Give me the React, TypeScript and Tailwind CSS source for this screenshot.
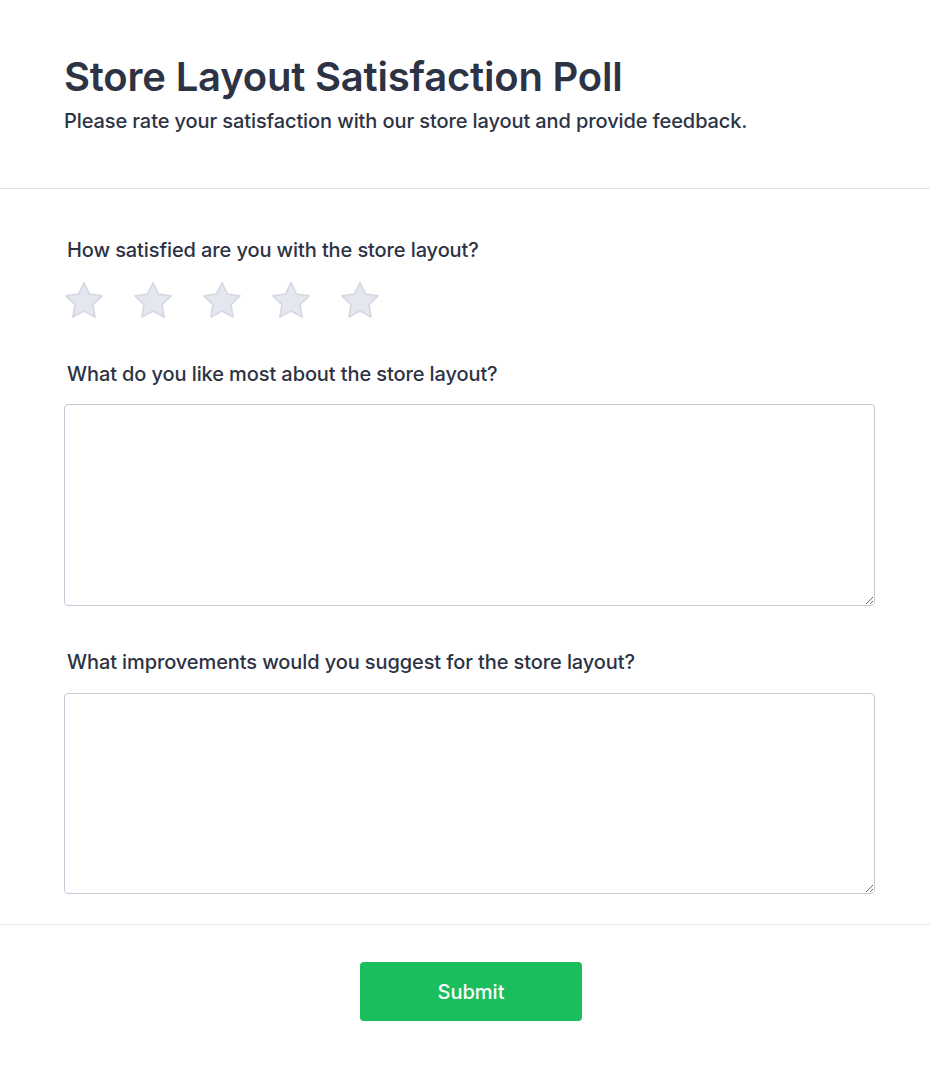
import React, { useState } from 'react';

const Star = ({ active }: { active: boolean }) => (
  <svg viewBox="2.2 2.2 19.6 18.8" className="w-[38px] h-[36px]">
    <path
      d="M12 2.6l2.9 5.9 6.5.9-4.7 4.6 1.1 6.5L12 17.4l-5.8 3.1 1.1-6.5-4.7-4.6 6.5-.9z"
      fill={active ? '#facc15' : '#e5e7ef'}
      stroke={active ? '#eab308' : '#d5d9e3'}
      strokeWidth="0.9"
      strokeLinejoin="round"
    />
  </svg>
);

export default function App() {
  const [rating, setRating] = useState(0);

  return (
    <div className="min-h-screen bg-white" style={{ fontFamily: 'Inter, "Noto Sans", sans-serif' }}>
      {/* Header */}
      <div className="px-16 pt-[53px] pb-[53px] border-b border-[#dde1ea]">
        <h1 className="text-[40px] leading-[48px] font-semibold text-[#2d3344] tracking-[-0.2px]">
          Store Layout Satisfaction Poll
        </h1>
        <p className="text-xl leading-7 font-medium tracking-[-0.1px] text-[#2d3344] mt-[6px]">
          Please rate your satisfaction with our store layout and provide feedback.
        </p>
      </div>

      {/* Questions */}
      <div className="pl-16 pr-[55px] pt-[47px] pb-[30px]">
        <label className="block ml-[3px] text-xl leading-7 font-medium tracking-[-0.1px] text-[#2d3344]">
          How satisfied are you with the store layout?
        </label>
        <div className="flex gap-[31px] mt-[18px] ml-px">
          {[1, 2, 3, 4, 5].map((n) => (
            <button key={n} type="button" onClick={() => setRating(n)}>
              <Star active={n <= rating} />
            </button>
          ))}
        </div>

        <label className="block ml-[3px] mt-[42px] text-xl leading-7 font-medium tracking-[-0.1px] text-[#2d3344]">
          What do you like most about the store layout?
        </label>
        <textarea className="block w-full h-[202px] mt-[16px] rounded border border-[#c6cad6] p-3 text-base" />

        <label className="block ml-[3px] mt-[42px] text-xl leading-7 font-medium tracking-[-0.1px] text-[#2d3344]">
          What improvements would you suggest for the store layout?
        </label>
        <textarea className="block w-full h-[201px] mt-[17px] rounded border border-[#c6cad6] p-3 text-base" />
      </div>

      {/* Footer */}
      <div className="border-t border-[#e5e7ee] flex justify-center pt-[37px] pb-[50px] pl-[12px]">
        <button
          type="button"
          className="w-[222px] h-[59px] rounded bg-[#1abe5c] text-white text-xl font-medium"
        >
          Submit
        </button>
      </div>
    </div>
  );
}
